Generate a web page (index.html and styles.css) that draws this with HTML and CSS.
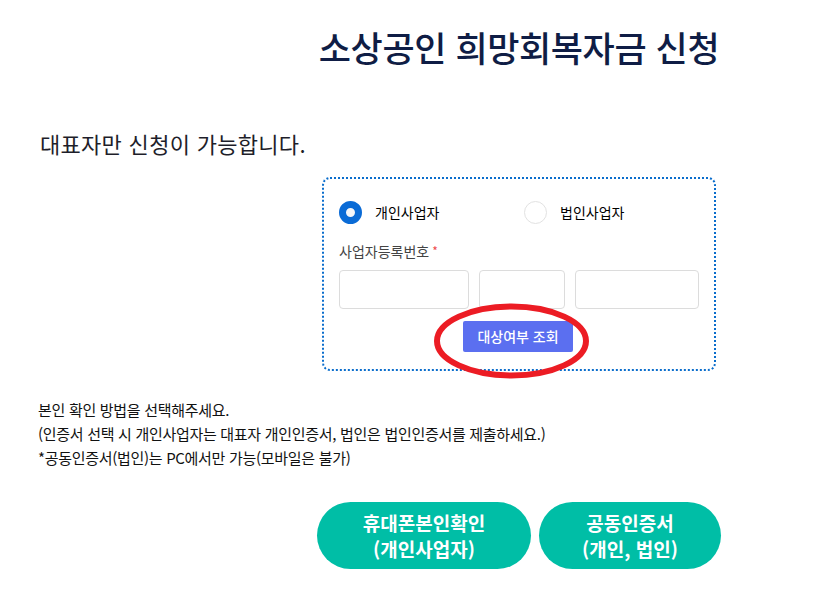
FILE: index.html
```html
<!DOCTYPE html>
<html lang="ko">
<head>
<meta charset="utf-8">
<title>소상공인 희망회복자금 신청</title>
<link rel="stylesheet" href="styles.css">
</head>
<body>
<main class="page">
  <div class="col">
    <h1 class="title">소상공인 희망회복자금 신청</h1>
  </div>
  <p class="lead">대표자만 신청이 가능합니다.</p>
  <div class="col">
    <form class="panel">
      <div class="radios">
        <label class="radio"><span class="dot on"></span>개인사업자</label>
        <label class="radio"><span class="dot"></span>법인사업자</label>
      </div>
      <div class="field-label">사업자등록번호<span class="req">*</span></div>
      <div class="inputs">
        <span class="box b1"></span>
        <span class="box b2"></span>
        <span class="box b3"></span>
      </div>
      <div class="btn-row">
        <span class="check-btn">대상여부 조회</span>
        <svg class="mark" width="160" height="84" viewBox="0 0 160 84"><ellipse cx="77.5" cy="39" rx="74.5" ry="34.5" fill="none" stroke="#ec1c24" stroke-width="6"/></svg>
      </div>
    </form>
  </div>
  <div class="notes">
    <p>본인 확인 방법을 선택해주세요.</p>
    <p>(인증서 선택 시 개인사업자는 대표자 개인인증서, 법인은 법인인증서를 제출하세요.)</p>
    <p>*공동인증서(법인)는 PC에서만 가능(모바일은 불가)</p>
  </div>
  <div class="col actions">
    <span class="pill p1">휴대폰본인확인<br>(개인사업자)</span>
    <span class="pill p2">공동인증서<br>(개인, 법인)</span>
  </div>
</main>
</body>
</html>
```

FILE: styles.css
```css
* { box-sizing: border-box; }
html, body { margin: 0; padding: 0; background: #fff; }
body {
  font-family: "Noto Sans CJK KR", "Noto Sans", sans-serif;
  color: #222;
}
.page {
  width: 831px;
  padding: 22px 0 0 38px;
}
.col {
  margin-left: 279px;
  width: 404px;
}
.title {
  margin: 0;
  text-align: center;
  font-size: 35px;
  font-weight: 500;
  line-height: 50px;
  letter-spacing: -0.4px;
  color: #0f1d45;
}
.lead {
  margin: 56px 0 0 2px;
  font-size: 22px;
  line-height: 30px;
  letter-spacing: 0.3px;
  color: #1e1e2a;
}
.panel {
  margin: 19px 0 0 5px;
  width: 394px;
  height: 194px;
  border: 2px dotted #0a6dcc;
  border-radius: 8px;
  padding: 21px 15px 0 15px;
}
.radios {
  display: flex;
  align-items: center;
  height: 24px;
}
.radio {
  display: flex;
  align-items: center;
  gap: 13px;
  font-size: 14px;
  color: #000;
  flex: 0 0 185px;
}
.dot {
  width: 23px;
  height: 23px;
  border-radius: 50%;
  border: 1px solid #e2e2e2;
  background: #fff;
}
.dot.on {
  border: 7px solid #0a6bd6;
  background: #f4f6f9;
}
.field-label {
  margin-top: 17px;
  font-size: 14px;
  line-height: 20px;
  color: #444;
}
.req { color: #ee4b4b; margin-left: 3px; font-size: 12px; vertical-align: top; }
.inputs {
  display: flex;
  gap: 10px;
  margin-top: 9px;
}
.box {
  height: 39px;
  border: 1px solid #dcdcdc;
  border-radius: 4px;
  background: #fff;
}
.b1 { width: 130px; }
.b2 { width: 86px; }
.b3 { width: 124px; }
.btn-row {
  position: relative;
  display: flex;
  justify-content: center;
  margin-top: 12px;
  padding-right: 2px;
}
.check-btn {
  display: inline-block;
  background: #5b6ff0;
  color: #fff;
  width: 110px;
  height: 31px;
  line-height: 31px;
  text-align: center;
  font-size: 14px;
  font-weight: 500;
  border-radius: 2px;
}
.mark {
  position: absolute;
  left: 95px;
  top: -19px;
}
.notes {
  margin-top: 27px;
  font-size: 15px;
  color: #111;
  letter-spacing: -0.3px;
}
.notes p { margin: 0; line-height: 24px; }
.actions {
  display: flex;
  gap: 8px;
  margin-top: 32px;
}
.pill {
  display: flex;
  align-items: center;
  justify-content: center;
  text-align: center;
  height: 67px;
  border-radius: 34px;
  background: #00bea6;
  color: #fff;
  font-size: 19px;
  font-weight: 700;
  line-height: 26px;
}
.p1 { width: 214px; }
.p2 { width: 182px; }
```
